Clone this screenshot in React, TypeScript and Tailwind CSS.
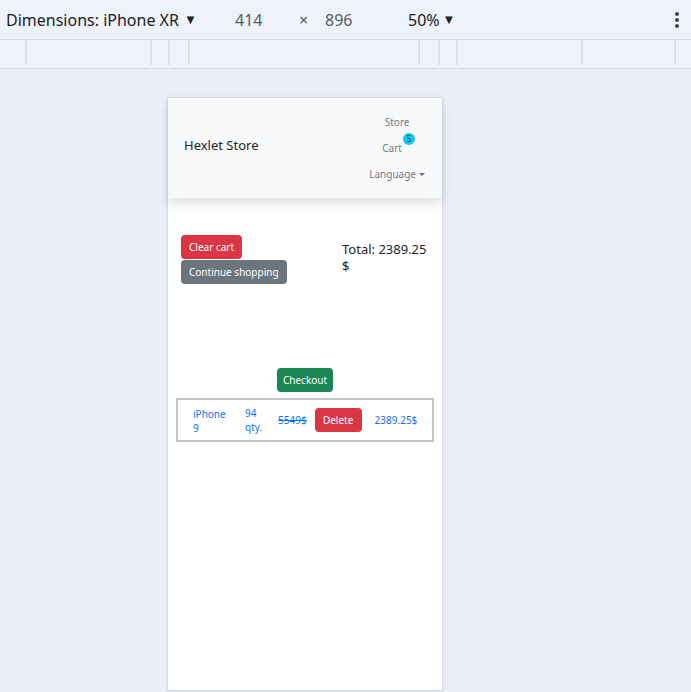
import React from 'react';

// ruler segment widths (px) between the tick lines of the device toolbar
const rulerStops = [27, 125, 18, 20, 230, 20, 18, 125, 93];

const Toolbar: React.FC = () => (
  <div className="h-[40px] flex items-center border-b border-[#d3dcec] bg-[#eef2fa] text-[#202124] text-[16px] relative">
    <span className="ml-[6px] flex items-center">
      Dimensions: iPhone XR
      <span className="ml-[5px] text-[13px]">▼</span>
    </span>
    <span className="absolute left-[235px] text-[#555d66]">414</span>
    <span className="absolute left-[299px] text-[#555d66]">×</span>
    <span className="absolute left-[325px] text-[#555d66]">896</span>
    <span className="absolute left-[408px] flex items-center">
      50%
      <span className="ml-[3px] text-[13px]">▼</span>
    </span>
    <span className="absolute left-[675px] flex flex-col gap-[2px]">
      <span className="w-[4px] h-[4px] rounded-full bg-[#444]" />
      <span className="w-[4px] h-[4px] rounded-full bg-[#444]" />
      <span className="w-[4px] h-[4px] rounded-full bg-[#444]" />
    </span>
  </div>
);

const Ruler: React.FC = () => (
  <div className="h-[29px] border-b border-[#d3dcec] bg-[#eef2fa] pb-[3px] flex">
    {rulerStops.map((w, i) => (
      <div key={i} className="h-full border-r-2 border-[#d6e0f1] shrink-0" style={{ width: w }} />
    ))}
  </div>
);

const Navbar: React.FC = () => (
  <nav className="h-[100px] bg-[#f8f9fa] shadow-[0_6px_10px_rgba(0,0,0,0.12)] flex items-center justify-between pl-[16px] pr-[17px] relative z-10">
    <span className="text-[13px] text-[#212529] -mt-[4px]">Hexlet Store</span>
    <div className="flex flex-col items-center text-[10px] text-[#737a80] gap-[11px]">
      <span>Store</span>
      <span className="relative pr-[10px]">
        Cart
        <span className="absolute right-[-3px] top-[-8px] w-[12px] h-[12px] rounded-full bg-[#0dcaf0] text-[8px] leading-none text-[#2a3a40] flex items-center justify-center">
          5
        </span>
      </span>
      <span className="flex items-center gap-[3px]">
        Language
        <span className="w-0 h-0 border-l-[3px] border-r-[3px] border-t-[3px] border-l-transparent border-r-transparent border-t-[#6c757d]" />
      </span>
    </div>
  </nav>
);

const CartTable: React.FC = () => (
  <div className="mx-[8px] mt-[6px] border-2 border-[#c4c4c4] h-[44px] flex items-center text-[10px] text-[#0d6efd] leading-[14px]">
    <span className="ml-[15px] w-[36px] pt-[1px]">iPhone 9</span>
    <span className="ml-[16px] w-[20px]">94 qty.</span>
    <span className="ml-[13px] line-through">5549$</span>
    <button className="ml-[8px] h-[24px] w-[47px] rounded-[4px] bg-[#dc3545] text-white">Delete</button>
    <span className="ml-[13px]">2389.25$</span>
  </div>
);

const App: React.FC = () => {
  return (
    <div className="w-[691px] h-[692px] overflow-hidden bg-[#ebeff8] font-['Noto_Sans','Open_Sans',sans-serif]">
      <Toolbar />
      <Ruler />
      <div className="pt-[28px] pl-[167px]">
        <div className="w-[276px] h-[594px] bg-white border border-[#d9dbe0] shadow-[0_0_4px_rgba(0,0,0,0.08)]">
          <Navbar />
          <div className="pt-[37px] pl-[13px] pr-[10px] flex justify-between">
            <div className="flex flex-col items-start text-[10px] text-white">
              <button className="h-[24px] px-[8px] rounded-[4px] bg-[#dc3545]">Clear cart</button>
              <button className="h-[24px] px-[8px] rounded-[4px] bg-[#6c757d] mt-[1px]">Continue shopping</button>
            </div>
            <div className="w-[90px] pt-[6px] text-[13px] text-[#212529] leading-[17px]">
              Total: 2389.25 $
            </div>
          </div>
          <div className="flex justify-center mt-[84px]">
            <button className="h-[24px] px-[6px] rounded-[4px] bg-[#198754] text-white text-[10px]">Checkout</button>
          </div>
          <CartTable />
        </div>
      </div>
    </div>
  );
};

export default App;
